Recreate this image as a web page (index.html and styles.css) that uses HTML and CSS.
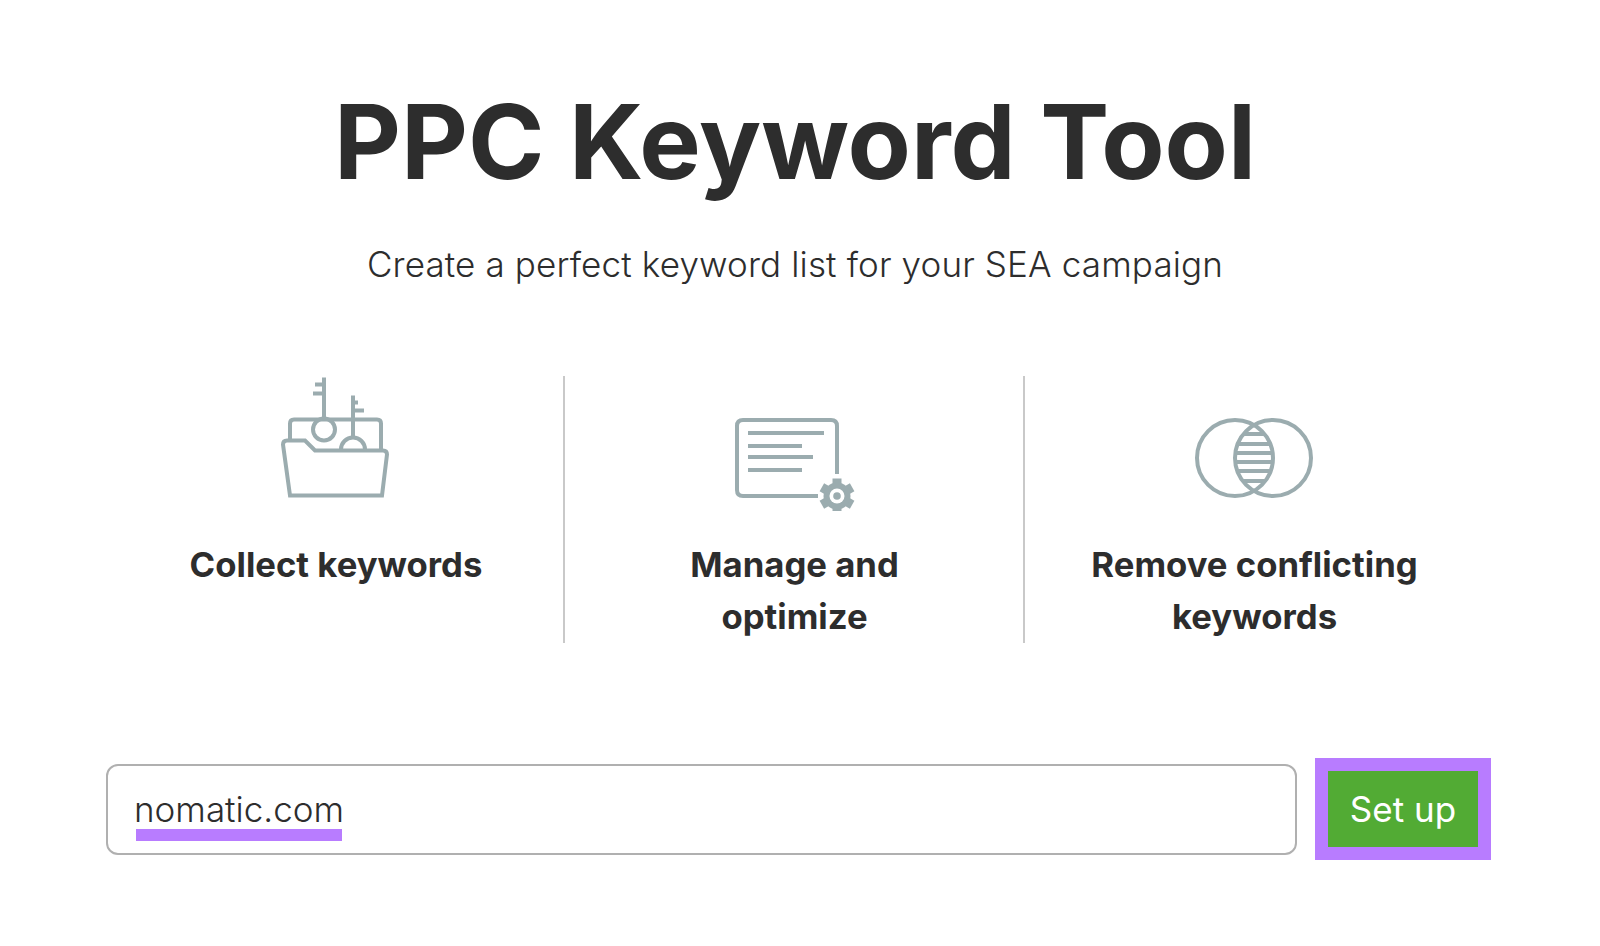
FILE: index.html
```html
<!DOCTYPE html>
<html lang="en">
<head>
  <meta charset="UTF-8" />
  <title>PPC Keyword Tool</title>
  <link rel="stylesheet" href="styles.css">
</head>
<body>
  <main class="page">
    <h1>PPC Keyword Tool</h1>
    <p class="subtitle">Create a perfect keyword list for your SEA campaign</p>

    <section class="features">
      <div class="feature">
        <svg class="icon" width="160" height="135" viewBox="-4 15.5 160 135">
          <path d="M30 80V63q0-4 4-4h83q4 0 4 4v27" />
          <path d="M30 135 23 84q0-4 4-4h18l10 10h68q4 0 4 4l-5 41z" />
          <circle cx="64" cy="69" r="11" />
          <path d="M64 58V17M55 24h9M53 33h11" />
          <path d="M93 76V35M93 42h5M93 50h11" />
          <path d="M81 89a12 12 0 0 1 24 0" />
        </svg>
        <h3>Collect keywords</h3>
      </div>
      <div class="feature">
        <svg class="icon" width="160" height="135" viewBox="-5 -25 160 135">
          <path d="M98 95H23q-6 0-6-6V25q0-6 6-6h88q6 0 6 6v48" />
          <path d="M28 32h76M28 45h54M28 56h65M28 69h54" />
          <g class="gear">
            <rect x="112.5" y="77.5" width="9" height="35" />
            <rect x="112.5" y="77.5" width="9" height="35" transform="rotate(60 117 95)" />
            <rect x="112.5" y="77.5" width="9" height="35" transform="rotate(120 117 95)" />
            <circle cx="117" cy="95" r="13.5" />
          </g>
          <circle class="gear-hole" cx="117" cy="95" r="7.5" />
          <circle class="gear" cx="117" cy="95" r="3.8" />
        </svg>
        <h3>Manage and<br>optimize</h3>
      </div>
      <div class="feature">
        <svg class="icon" width="160" height="135" viewBox="-5 -25 160 135">
          <defs>
            <clipPath id="left-ring"><circle cx="55" cy="57" r="38" /></clipPath>
            <clipPath id="right-ring"><circle cx="93" cy="57" r="38" /></clipPath>
          </defs>
          <circle cx="55" cy="57" r="38" />
          <circle cx="93" cy="57" r="38" />
          <g clip-path="url(#left-ring)">
            <path clip-path="url(#right-ring)" d="M50 33h48M50 43h48M50 52h48M50 61h48M50 70h48M50 80h48" />
          </g>
        </svg>
        <h3>Remove conflicting<br>keywords</h3>
      </div>
    </section>

    <form class="setup">
      <div class="domain"><span class="domain-text">nomatic.com</span></div>
      <button type="button" class="setup-btn">Set up</button>
    </form>
  </main>
</body>
</html>
```

FILE: styles.css
```css
body {
  margin: 0;
  background: #fff;
  color: #2d2d2d;
  font-family: Inter, sans-serif;
}
.page {
  width: 1378px;
  margin-left: 106px;
  padding-top: 84px;
}
h1 {
  margin: 0;
  text-align: center;
  font-size: 103.4px;
  line-height: 116px;
  font-weight: 700;
}
.subtitle {
  margin: 42px 0 0;
  text-align: center;
  font-size: 35px;
  letter-spacing: 0.14px;
  line-height: 44px;
  font-weight: 300;
}
.features {
  display: grid;
  grid-template-columns: 457px 460px 460px;
  margin-top: 90px;
}
.feature {
  box-sizing: border-box;
  height: 267px;
  padding-left: 1px;
  text-align: center;
  border-left: 2px solid #c9c9c9;
}
.feature:first-child {
  border-left: none;
  padding-left: 3px;
}
.feature h3 {
  margin: 27px 0 0;
  font-size: 34.7px;
  line-height: 52px;
  font-weight: 700;
}
.icon {
  display: block;
  margin: 0 auto;
  fill: none;
  stroke: #9bacaf;
  stroke-width: 4;
}
.gear {
  fill: #9bacaf;
  stroke: none;
}
.gear-hole {
  fill: #fff;
  stroke: none;
}
.setup {
  display: flex;
  align-items: center;
  gap: 18px;
  margin-top: 115px;
  width: 1385px;
}
.domain {
  box-sizing: border-box;
  width: 1191px;
  height: 91px;
  padding: 0 26px;
  display: flex;
  align-items: center;
  border: 2px solid #b0b0b0;
  border-radius: 12px;
  font-size: 35px;
  font-weight: 300;
}
.domain-text {
  padding-bottom: 13px;
  line-height: 38px;
  margin-top: 13px;
  background: linear-gradient(#b87cff, #b87cff) 2px 100% / calc(100% - 4px) 12px no-repeat;
}
.setup-btn {
  box-sizing: content-box;
  width: 150px;
  height: 76px;
  padding: 0;
  border: 13px solid #b87cff;
  background: #52ab34;
  color: #fff;
  font-family: Inter, sans-serif;
  font-size: 35px;
  font-weight: 400;
}
```
